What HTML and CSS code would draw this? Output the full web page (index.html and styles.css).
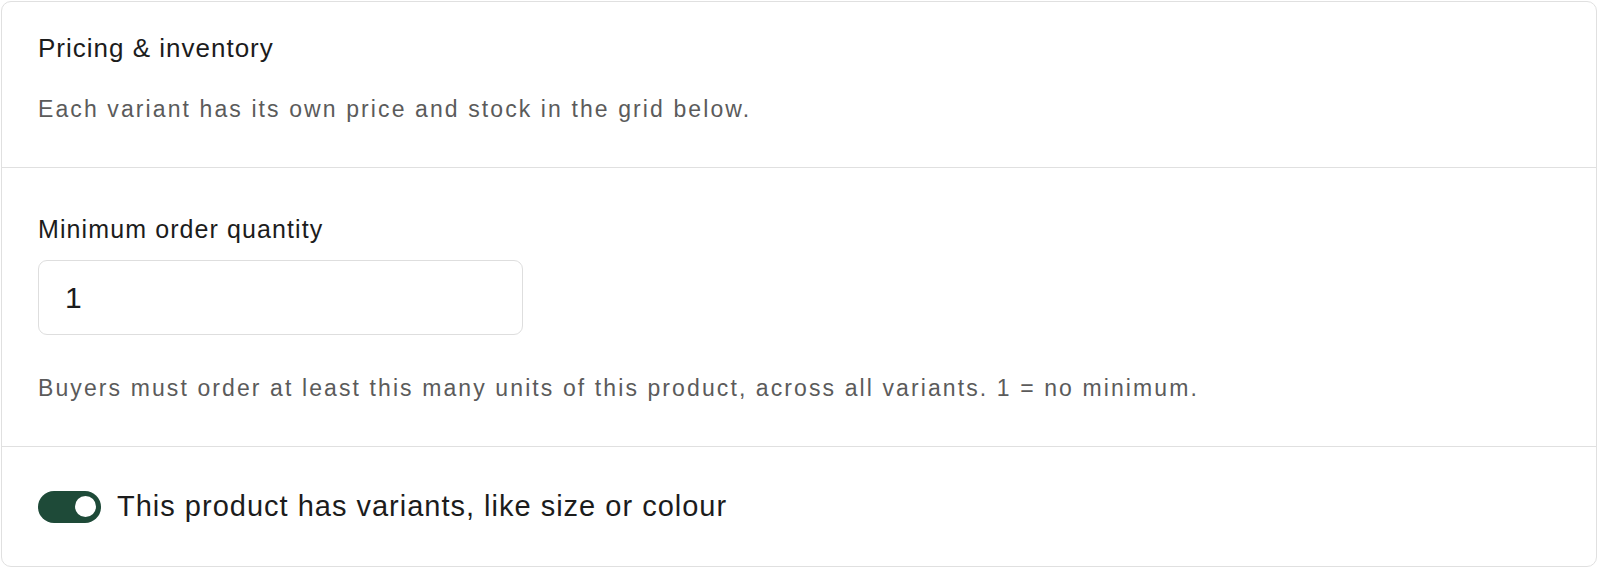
FILE: index.html
```html
<!DOCTYPE html>
<html lang="en">
<head>
    <meta charset="UTF-8">
    <meta name="viewport" content="width=device-width, initial-scale=1.0">
    <title>Product - Pricing</title>
    <link rel="stylesheet" href="styles.css">
</head>
<body>
    <div class="card">
        <section class="card-section">
            <h2 class="section-title">Pricing &amp; inventory</h2>
            <p class="hint">Each variant has its own price and stock in the grid below.</p>
        </section>

        <section class="card-section moq">
            <label for="moq" class="field-label">Minimum order quantity</label>
            <input type="text" id="moq" class="field-input" value="1">
            <p class="hint">Buyers must order at least this many units of this product, across all variants. 1 = no minimum.</p>
        </section>

        <section class="card-section variants">
            <label class="switch-row">
                <span class="switch on"><span class="knob"></span></span>
                <span class="switch-text">This product has variants, like size or colour</span>
            </label>
        </section>
    </div>
</body>
</html>
```

FILE: styles.css
```css
/* Product editor: pricing card */

body {
    background-color: #fff;
    font-family: "Liberation Sans", Arial, sans-serif;
    margin: 0;
    padding: 1px 3px 0 1px;
}

.card {
    border: 1px solid #e0e0e0;
    border-radius: 10px;
    background: #fff;
}

.card-section {
    padding: 0 36px;
}

.card-section + .card-section {
    border-top: 1px solid #e0e0e0;
}

.section-title {
    margin: 0;
    padding-top: 31px;
    font-size: 26px;
    font-weight: normal;
    letter-spacing: 1px;
    color: #1c1c1c;
}

.hint {
    margin: 0;
    font-size: 23px;
    letter-spacing: 2.1px;
    color: #5b5b5b;
}

.card-section:first-child .hint {
    padding-top: 32px;
    padding-bottom: 44px;
}

.moq {
    padding-top: 47px;
    padding-bottom: 44px;
}

.field-label {
    display: block;
    font-size: 25px;
    letter-spacing: 1.1px;
    color: #1c1c1c;
    margin-bottom: 16px;
}

.field-input {
    display: block;
    box-sizing: border-box;
    width: 485px;
    height: 75px;
    padding: 0 26px;
    border: 1px solid #dedede;
    border-radius: 9px;
    font-family: "Liberation Sans", Arial, sans-serif;
    font-size: 30px;
    color: #1c1c1c;
    margin-bottom: 40px;
}

.variants {
    padding-top: 43px;
    padding-bottom: 43px;
}

.switch-row {
    display: flex;
    align-items: center;
    gap: 16px;
    cursor: pointer;
}

.switch {
    width: 63px;
    height: 32px;
    border-radius: 16px;
    background-color: #1e4a38;
    display: flex;
    align-items: center;
    justify-content: flex-end;
    padding: 0 5px;
    box-sizing: border-box;
}

.knob {
    width: 21px;
    height: 21px;
    border-radius: 50%;
    background: #fff;
}

.switch-text {
    font-size: 29px;
    letter-spacing: 1px;
    color: #1c1c1c;
}
```
